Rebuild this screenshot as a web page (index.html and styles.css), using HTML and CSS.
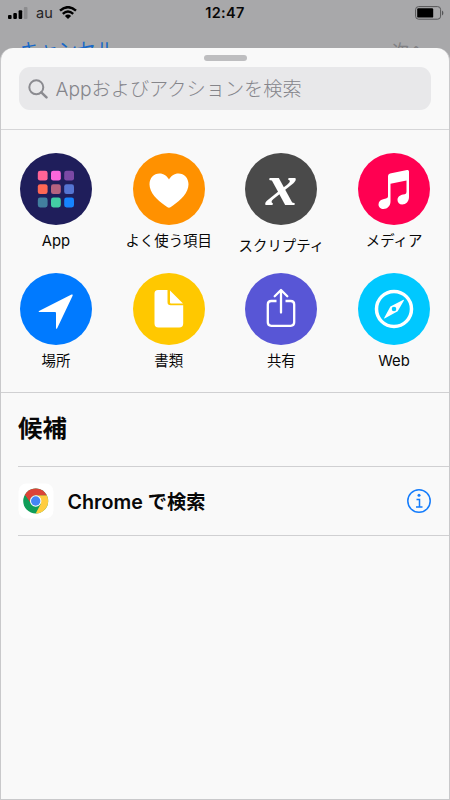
FILE: index.html
```html
<!DOCTYPE html>
<html lang="ja">
<head>
<meta charset="utf-8">
<title>アクションを検索</title>
<link rel="stylesheet" href="styles.css">
</head>
<body>
<div class="screen">
  <header class="status">
    <div class="carrier">
      <svg width="20" height="12" viewBox="0 0 20 12"><rect x="0" y="8" width="3.6" height="4" rx="1"/><rect x="5.3" y="6" width="3.6" height="6" rx="1"/><rect x="10.6" y="3.2" width="3.6" height="8.8" rx="1"/><rect x="15.9" y="0" width="3.6" height="12" rx="1" fill="#8c8c8e"/></svg>
      <span class="carrier-name">au</span>
      <svg class="wifi" width="18" height="13" viewBox="0 0 18 13"><g fill="none" stroke="#000" stroke-width="2.4"><path d="M1 4.7Q9-2.4 17 4.7"/><path d="M3.8 7.8Q9 3.1 14.2 7.8"/></g><path d="M9 13 5.9 9.9Q9 7.3 12.1 9.9Z"/></svg>
    </div>
    <time class="clock">12:47</time>
    <svg class="battery" width="29" height="14" viewBox="0 0 29 14"><rect x=".6" y=".6" width="25" height="12.6" rx="3" fill="none" stroke="#555557"/><rect x="2.2" y="2.2" width="16" height="9.4" rx="1.2"/><path d="M27 4.5Q28.4 5.3 28.4 7T27 9.5Z" fill="#555557"/></svg>
  </header>
  <nav class="nav"><span class="cancel">キャンセル</span><span class="next">次へ</span></nav>
  <main class="sheet">
    <div class="grabber"></div>
    <div class="search">
      <svg width="20" height="20" viewBox="0 0 20 20" fill="none" stroke="#8b8b90" stroke-width="2"><circle cx="8.3" cy="8.3" r="7"/><path d="m13.3 13.3 5.2 5" stroke-width="2.5" stroke-linecap="round"/></svg>
      <span class="placeholder">Appおよびアクションを検索</span>
    </div>
    <section class="categories">
      <div class="category">
        <svg class="disc" viewBox="0 0 72 72"><circle cx="36" cy="36" r="36" fill="#1f1e5b"/><rect x="17.8" y="17.8" width="9.8" height="9.8" rx="2.3" fill="#ff6496"/><rect x="31" y="17.8" width="9.8" height="9.8" rx="2.3" fill="#fb67dc"/><rect x="44.2" y="17.8" width="9.8" height="9.8" rx="2.3" fill="#7b49a5"/><rect x="17.8" y="31.2" width="9.8" height="9.8" rx="2.3" fill="#ff6754"/><rect x="31" y="31.2" width="9.8" height="9.8" rx="2.3" fill="#b66380"/><rect x="44.2" y="31.2" width="9.8" height="9.8" rx="2.3" fill="#5575d2"/><rect x="17.8" y="44.6" width="9.8" height="9.8" rx="2.3" fill="#427f9f"/><rect x="31" y="44.6" width="9.8" height="9.8" rx="2.3" fill="#43cda4"/><rect x="44.2" y="44.6" width="9.8" height="9.8" rx="2.3" fill="#1684ff"/></svg>
        <span class="label latin">App</span>
      </div>
      <div class="category">
        <svg class="disc" viewBox="0 0 72 72"><circle cx="36" cy="36" r="36" fill="#ff9100"/><path fill="#fff" d="M36 54.8C34.8 54.8 33.5 53.7 32 52.6 24 46.7 16.5 39.8 16.5 31.3 16.5 25 20.8 20.5 26.5 20.5 30.7 20.5 34.2 23 36 26.6 37.8 23 41.3 20.5 45.5 20.5 51.2 20.5 55.5 25 55.5 31.3 55.5 39.8 48 46.7 40 52.6 38.5 53.7 37.2 54.8 36 54.8Z"/></svg>
        <span class="label">よく使う項目</span>
      </div>
      <div class="category">
        <div class="disc script"><span class="script-x">x</span></div>
        <span class="label lowered">スクリプティ</span>
      </div>
      <div class="category">
        <svg class="disc" viewBox="0 0 72 72"><circle cx="36" cy="36" r="36" fill="#ff0051"/><path fill="#fff" d="M30 23Q30 21 32 20.5L49 17Q51 16.6 51 18.5V44C51 48.5 48 51.5 44.2 51.5 41.500 51.500 39.500 49.600 39.500 47 39.500 44 42 42.200 45 41.600L46.800 41.200Q48.500 40.900 48.500 39V27.500L32.500 30.800V48.500C32.500 52.800 29.500 56 25.500 56 22.600 56 20.500 54 20.500 51.400 20.500 48.500 22.700 46.700 26 46L28 45.600Q30 45.200 30 43.500Z"/></svg>
        <span class="label">メディア</span>
      </div>
      <div class="category">
        <svg class="disc" viewBox="0 0 72 72"><circle cx="36" cy="36" r="36" fill="#007aff"/><path fill="#fff" d="M19.500 37.800 51.500 21.600Q53.200 20.900 52.600 22.800L37.300 55Q36.200 57 36 54.500V40Q36 39 35 39H20Q17.500 39 19.500 37.800Z"/></svg>
        <span class="label">場所</span>
      </div>
      <div class="category">
        <svg class="disc" viewBox="0 0 72 72"><circle cx="36" cy="36" r="36" fill="#ffc800"/><path fill="#fff" d="M25 17H34.500V29Q34.500 32.200 37.700 32.200H50.200V50.500Q50.200 54.500 46.200 54.500H25.500Q21.500 54.500 21.500 50.500V20.500Q21.500 17 25 17ZM37 17.500 50 30.500H38Q37 30.500 37 29.500Z"/></svg>
        <span class="label">書類</span>
      </div>
      <div class="category">
        <svg class="disc" viewBox="0 0 72 72"><circle cx="36" cy="36" r="36" fill="#5856d6"/><g fill="none" stroke="#fff" stroke-width="2.3" stroke-linecap="round" stroke-linejoin="round"><path stroke-linecap="butt" d="M31.500 28H26.300Q22.800 28 22.800 31.500V49.300Q22.800 52.800 26.300 52.800H45.700Q49.200 52.800 49.200 49.300V31.500Q49.200 28 45.700 28H40.500"/><path d="M36 39.500V17.300M29.700 23.300 36 17 42.300 23.300"/></g></svg>
        <span class="label">共有</span>
      </div>
      <div class="category">
        <svg class="disc" viewBox="0 0 72 72"><circle cx="36" cy="36" r="36" fill="#00c8ff"/><circle cx="36" cy="36" r="17.500" fill="none" stroke="#fff" stroke-width="3.500"/><path fill="#fff" fill-rule="evenodd" d="M45 27.100Q46.700 26 45.600 28L39.700 38.200 27 45.300Q25.600 45.900 26.400 44.600L32.400 33.500ZM36 33.700A2.300 2.300 0 1 0 36 38.300 2.300 2.300 0 1 0 36 33.700Z"/></svg>
        <span class="label latin">Web</span>
      </div>
    </section>
    <section class="suggestions">
      <h2 class="heading">候補</h2>
      <div class="row">
        <svg class="chrome" width="36" height="36" viewBox="0 0 36 36"><rect x=".5" y=".5" width="35" height="35" rx="8" fill="#fff"/><circle cx="17.700" cy="18" r="12.500" fill="#0f9d58"/><path fill="#ffcd40" d="M17.700 12.200H28.800A12.500 12.500 0 0 1 17.700 30.500L22.700 20.900Z"/><path fill="#db4437" d="M6.900 11.700A12.500 12.500 0 0 1 28.800 12.200H17.700A5.800 5.800 0 0 0 12.300 19.500Z"/><circle cx="17.700" cy="18" r="5.700" fill="#fff"/><circle cx="17.700" cy="18" r="4.700" fill="#4285f4"/></svg>
        <span class="row-title">Chrome <span class="row-title-ja">で検索</span></span>
        <svg width="24" height="24" viewBox="0 0 24 24"><circle cx="12" cy="12" r="11.200" fill="none" stroke="#147cfc" stroke-width="1.500"/><circle cx="12" cy="6.300" r="1.500" fill="#147cfc"/><path d="M9.500 10.500H12.500V17.700M9 17.900H15.500" fill="none" stroke="#147cfc" stroke-width="1.500"/></svg>
      </div>
    </section>
  </main>
</div>
</body>
</html>
```

FILE: styles.css
```css
* { box-sizing: border-box; }
body {
  margin: 0;
  font-family: Inter, "Noto Sans CJK JP", sans-serif;
  color: #080808;
}
.screen {
  height: 800px;
  overflow: hidden;
  display: flex;
  flex-direction: column;
  background: #a8a8aa;
}
.status {
  height: 25px;
  flex: none;
  display: grid;
  grid-template-columns: 1fr auto 1fr;
  align-items: center;
  padding: 0 6px 0 8px;
}
.carrier { display: flex; align-items: center; }
.carrier-name { font-size: 14.5px; margin: 0 6px 0 8px; line-height: 18px; width: 17px; color: #242426; }
.clock { font-size: 14.5px; font-weight: 600; line-height: 20px; letter-spacing: .3px; margin-left: -2px; }
.battery { justify-self: end; }
.nav {
  height: 23px;
  flex: none;
  display: flex;
  justify-content: space-between;
  padding: 12px 24px 0 20px;
  font-size: 19px;
  line-height: 28px;
}
.cancel { color: #1768c8; font-weight: 400; }
.next { color: #808083; font-size: 17px; }
.sheet {
  position: relative;
  flex: 1;
  background: #f9f9f9;
  border: 1px solid #c9c9cb;
  border-top: 0;
  border-radius: 13px 13px 0 0;
}
.grabber { width: 43px; height: 6px; margin: 7px auto 6px; border-radius: 3px; background: #bebec0; }
.search {
  height: 43px;
  margin: 0 18px;
  padding-left: 9px;
  display: flex;
  align-items: center;
  border-radius: 11px;
  background: #e8e8ea;
}
.placeholder { margin-left: 7.5px; font-size: 19.2px; line-height: 28px; font-weight: 300; color: #85858a; white-space: nowrap; }
.categories {
  height: 264.5px;
  margin-top: 18.5px;
  padding: 23.2px 0 0;
  display: grid;
  grid-template-columns: repeat(4, 112.7px);
  grid-auto-rows: 120px;
  justify-content: center;
  border-top: 1px solid #d6d6d8;
  border-bottom: 1px solid #d0d0d2;
}
.category { display: flex; flex-direction: column; align-items: center; }
.disc { width: 72px; height: 72px; flex: none; }
.script { border-radius: 50%; background: #4a4a4a; display: flex; align-items: center; justify-content: center; }
.script-x { font: italic bold 59px/60px "Liberation Serif", serif; color: #fff; margin-top: -7px; transform: scaleX(1.06); }
.label { margin-top: 5.8px; font-size: 14.4px; line-height: 22px; white-space: nowrap; }
.latin { font-size: 14.8px; }
.lowered { margin-top: 10.8px; }
.suggestions { padding-left: 17px; }
.heading { height: 73px; margin: 0; padding-top: 16.5px; font-size: 24.4px; line-height: 36px; font-weight: 700; }
.row {
  height: 70px;
  display: flex;
  align-items: center;
  padding-right: 18px;
  border-top: 1px solid #d0d0d2;
  border-bottom: 1px solid #d0d0d2;
}
.row-title { flex: 1; margin: 1px 0 0 13.5px; font-size: 19.7px; font-weight: 600; line-height: 28px; }
.row-title-ja { font-size: 19.2px; }
```
